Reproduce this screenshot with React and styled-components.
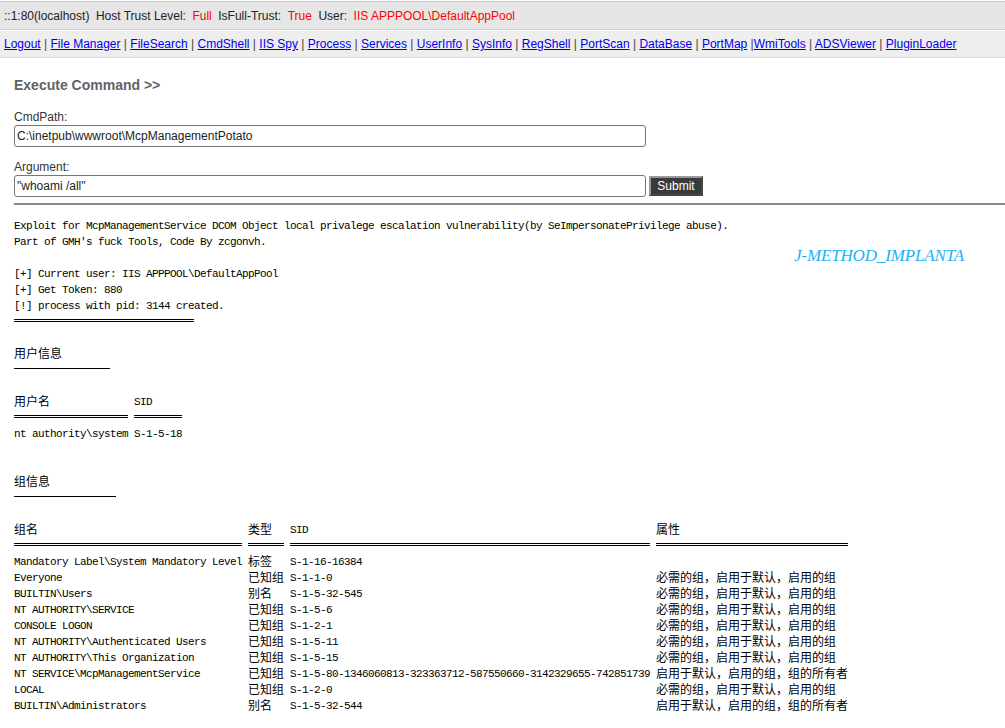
import { Fragment } from "react";
import styled, { createGlobalStyle } from "styled-components";

const GlobalStyle = createGlobalStyle`
  html, body {
    margin: 0;
    padding: 0;
    height: 100%;
    overflow: hidden;
    background: #fff;
  }
  body {
    font-family: "Liberation Sans", Arial, sans-serif;
    font-size: 12px;
    color: #222;
  }
`;

const Page = styled.div`
  position: relative;
  width: 1005px;
  height: 728px;
  overflow: hidden;
`;

const TopBar = styled.div`
  display: flex;
  align-items: center;
  gap: 6.5px;
  height: 27px;
  margin-top: 1px;
  padding-left: 4px;
  background: #e6e6e6;
  border-top: 1px solid #ccc;
  border-bottom: 1px solid #ccc;
  color: #222;
`;

const Red = styled.span`
  color: #f00;
`;

const NavBar = styled.nav`
  height: 26px;
  line-height: 27px;
  padding-left: 4px;
  background: #eee;
  border-top: 1px solid #fff;
  border-bottom: 1px solid #ddd;
  white-space: pre;
  color: #444;

  a {
    color: #00e;
    text-decoration: underline;
  }
`;

const Form = styled.form`
  padding: 19px 0 0 14px;
`;

const Title = styled.h2`
  margin: 0 0 17px;
  font-size: 14px;
  line-height: 16px;
  font-weight: bold;
  color: #5f6368;
`;

const Field = styled.div`
  display: flex;
  flex-direction: column;
  margin-bottom: 13px;
`;

const Label = styled.label`
  line-height: 15px;
  color: #333;
`;

const FieldRow = styled.div`
  display: flex;
  align-items: center;
  gap: 3px;
`;

const TextInput = styled.input`
  box-sizing: border-box;
  width: 632px;
  height: 22px;
  padding: 0 2px;
  border: 1px solid #767676;
  border-radius: 3px;
  background: #fff;
  font: 12px "Liberation Sans", Arial, sans-serif;
  color: #222;
  outline: none;
`;

const SubmitButton = styled.button`
  box-sizing: border-box;
  width: 54px;
  height: 20px;
  padding: 0;
  border: 2px outset #999;
  background: #3a3a3a;
  color: #fff;
  font: 12px "Liberation Sans", Arial, sans-serif;
`;

const Divider = styled.hr`
  height: 2px;
  margin: -7px 0 0 14px;
  border: 0;
  background: #888;
`;

const Output = styled.div`
  padding: 11px 0 0 14px;
  font-family: "Liberation Mono", "Noto Sans CJK SC", monospace;
  font-size: 11px;
  letter-spacing: -0.6px;
  line-height: 16px;
  color: #000;
`;

const Line = styled.div`
  box-sizing: border-box;
  height: 16px;
  padding-top: 2px;
  white-space: pre;
`;

const Cjk = styled.span`
  font-family: "Noto Sans CJK SC", sans-serif;
  font-size: 12px;
  letter-spacing: 0;
  line-height: 14px;
  vertical-align: 1px;
`;

const RuleLine = styled.div`
  height: 16px;
  display: flex;
  align-items: center;
`;

const DoubleRule = styled.div`
  box-sizing: border-box;
  width: ${(p) => p.$w}px;
  height: 3px;
  border-top: 1px solid #000;
  border-bottom: 1px solid #000;
`;

const SingleRule = styled.div`
  width: ${(p) => p.$w}px;
  height: 1px;
  background: #000;
`;

const Table = styled.div`
  display: grid;
  grid-template-columns: ${(p) => p.$cols};
  column-gap: 6px;
  grid-auto-rows: 16px;
  width: max-content;
`;

const Cell = styled.div`
  box-sizing: border-box;
  padding-top: 2px;
  white-space: pre;
  min-width: 0;
`;

const RuleCell = styled.div`
  display: flex;
  align-items: center;
`;

const FullRule = styled.div`
  box-sizing: border-box;
  width: 100%;
  height: 3px;
  border-top: 1px solid #000;
  border-bottom: 1px solid #000;
`;

const Watermark = styled.div`
  position: absolute;
  left: 794px;
  top: 246px;
  font-family: "Liberation Serif", serif;
  font-style: italic;
  font-size: 17px;
  line-height: 20px;
  letter-spacing: -0.15px;
  color: #1ab2f5;
  white-space: nowrap;
`;

const navLinks = [
  ["Logout", " | "], ["File Manager", " | "], ["FileSearch", " | "], ["CmdShell", " | "],
  ["IIS Spy", " | "], ["Process", " | "], ["Services", " | "], ["UserInfo", " | "],
  ["SysInfo", " | "], ["RegShell", " | "], ["PortScan", " | "], ["DataBase", " | "],
  ["PortMap", " |"], ["WmiTools", " | "], ["ADSViewer", " | "], ["PluginLoader", ""],
];

const required = "必需的组，启用于默认，启用的组";
const owner = "启用于默认，启用的组，组的所有者";

const groups = [
  ["Mandatory Label\\System Mandatory Level", "标签", "S-1-16-16384", ""],
  ["Everyone", "已知组", "S-1-1-0", required],
  ["BUILTIN\\Users", "别名", "S-1-5-32-545", required],
  ["NT AUTHORITY\\SERVICE", "已知组", "S-1-5-6", required],
  ["CONSOLE LOGON", "已知组", "S-1-2-1", required],
  ["NT AUTHORITY\\Authenticated Users", "已知组", "S-1-5-11", required],
  ["NT AUTHORITY\\This Organization", "已知组", "S-1-5-15", required],
  ["NT SERVICE\\McpManagementService", "已知组", "S-1-5-80-1346060813-323363712-587550660-3142329655-742851739", owner],
  ["LOCAL", "已知组", "S-1-2-0", required],
  ["BUILTIN\\Administrators", "别名", "S-1-5-32-544", owner],
];

export default function App() {
  return (
    <Page>
      <GlobalStyle />
      <TopBar>
        <span>::1:80(localhost)</span>
        <span>Host Trust Level:</span>
        <Red>Full</Red>
        <span>IsFull-Trust:</span>
        <Red>True</Red>
        <span>User:</span>
        <Red>IIS APPPOOL\DefaultAppPool</Red>
      </TopBar>
      <NavBar>
        {navLinks.map(([name, sep]) => (
          <span key={name}>
            <a href="#">{name}</a>
            {sep}
          </span>
        ))}
      </NavBar>
      <Form onSubmit={(e) => e.preventDefault()}>
        <Title>Execute Command &gt;&gt;</Title>
        <Field>
          <Label>CmdPath:</Label>
          <FieldRow>
            <TextInput defaultValue="C:\inetpub\wwwroot\McpManagementPotato" />
          </FieldRow>
        </Field>
        <Field>
          <Label>Argument:</Label>
          <FieldRow>
            <TextInput defaultValue={'"whoami /all"'} />
            <SubmitButton type="submit">Submit</SubmitButton>
          </FieldRow>
        </Field>
      </Form>
      <Divider />
      <Output>
        <Line>Exploit for McpManagementService DCOM Object local privalege escalation vulnerability(by SeImpersonatePrivilege abuse).</Line>
        <Line>Part of GMH's fuck Tools, Code By zcgonvh.</Line>
        <Line />
        <Line>[+] Current user: IIS APPPOOL\DefaultAppPool</Line>
        <Line>[+] Get Token: 880</Line>
        <Line>[!] process with pid: 3144 created.</Line>
        <RuleLine><DoubleRule $w={180} /></RuleLine>
        <Line />
        <Line><Cjk>用户信息</Cjk></Line>
        <RuleLine><SingleRule $w={96} /></RuleLine>
        <Line />
        <Table $cols="114px 48px">
          <Cell><Cjk>用户名</Cjk></Cell>
          <Cell>SID</Cell>
          <RuleCell><FullRule /></RuleCell>
          <RuleCell><FullRule /></RuleCell>
          <Cell>nt authority\system</Cell>
          <Cell>S-1-5-18</Cell>
        </Table>
        <Line />
        <Line />
        <Line><Cjk>组信息</Cjk></Line>
        <RuleLine><SingleRule $w={102} /></RuleLine>
        <Line />
        <Table $cols="228px 36px 360px 192px">
          <Cell><Cjk>组名</Cjk></Cell>
          <Cell><Cjk>类型</Cjk></Cell>
          <Cell>SID</Cell>
          <Cell><Cjk>属性</Cjk></Cell>
          <RuleCell><FullRule /></RuleCell>
          <RuleCell><FullRule /></RuleCell>
          <RuleCell><FullRule /></RuleCell>
          <RuleCell><FullRule /></RuleCell>
          {groups.map(([name, type, sid, attrs]) => (
            <Fragment key={name}>
              <Cell>{name}</Cell>
              <Cell><Cjk>{type}</Cjk></Cell>
              <Cell>{sid}</Cell>
              <Cell><Cjk>{attrs}</Cjk></Cell>
            </Fragment>
          ))}
        </Table>
      </Output>
      <Watermark>J-METHOD_IMPLANTA</Watermark>
    </Page>
  );
}
